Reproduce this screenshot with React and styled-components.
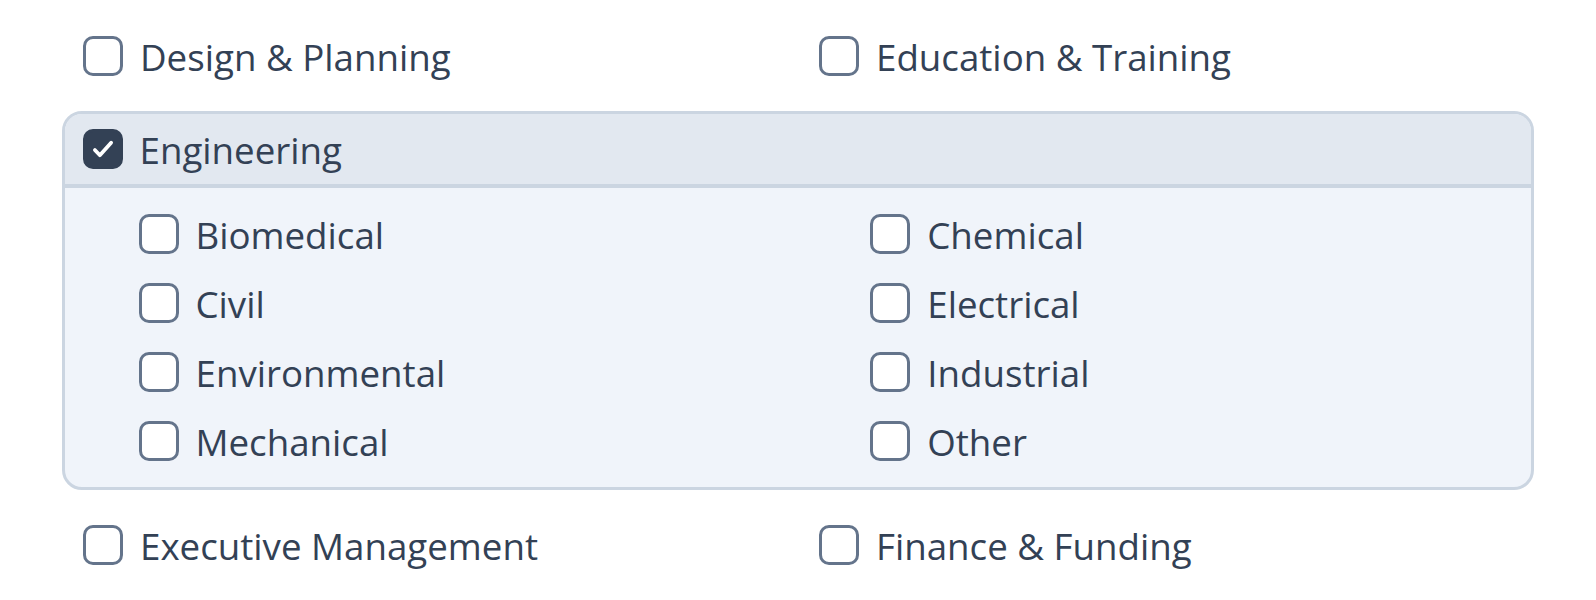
import React, { useState } from 'react'
import styled, { createGlobalStyle } from 'styled-components'

const GlobalStyle = createGlobalStyle`
  html, body {
    margin: 0;
    padding: 0;
    background: #ffffff;
  }
  body {
    font-family: "Open Sans", "Liberation Sans", sans-serif;
    color: #334155;
  }
`

const subFields = [
  'Biomedical', 'Chemical',
  'Civil', 'Electrical',
  'Environmental', 'Industrial',
  'Mechanical', 'Other',
]

function Check({ checked, label, onToggle }) {
  return (
    <Option onClick={onToggle}>
      <Box $checked={checked}>
        {checked && (
          <svg width="30" height="30" viewBox="0 0 24 24" fill="none">
            <path d="M5.5 12.8l4 4.2L18.5 7" stroke="#fff" strokeWidth="3" strokeLinecap="round" strokeLinejoin="round" />
          </svg>
        )}
      </Box>
      <Label>{label}</Label>
    </Option>
  )
}

export default function App() {
  const [checked, setChecked] = useState({ Engineering: true })
  const toggle = (k) => setChecked((s) => ({ ...s, [k]: !s[k] }))

  return (
    <>
      <GlobalStyle />
      <Page>
        <Row>
          <Cell><Check label="Design & Planning" checked={!!checked['Design & Planning']} onToggle={() => toggle('Design & Planning')} /></Cell>
          <Cell><Check label="Education & Training" checked={!!checked['Education & Training']} onToggle={() => toggle('Education & Training')} /></Cell>
        </Row>

        <Panel>
          <PanelHead>
            <Check label="Engineering" checked={!!checked.Engineering} onToggle={() => toggle('Engineering')} />
          </PanelHead>
          <SubGrid>
            {subFields.map((f) => (
              <SubCell key={f}>
                <Check label={f} checked={!!checked[f]} onToggle={() => toggle(f)} />
              </SubCell>
            ))}
          </SubGrid>
        </Panel>

        <Row>
          <Cell><Check label="Executive Management" checked={!!checked['Executive Management']} onToggle={() => toggle('Executive Management')} /></Cell>
          <Cell><Check label="Finance & Funding" checked={!!checked['Finance & Funding']} onToggle={() => toggle('Finance & Funding')} /></Cell>
        </Row>
      </Page>
    </>
  )
}

const Page = styled.div`
  width: 1472px;
  margin: 0 auto;
  padding: 21px 0 0;
  display: flex;
  flex-direction: column;
  gap: 20px;
`

const Row = styled.div`
  display: grid;
  grid-template-columns: 1fr 1fr;
`

const Cell = styled.div`
  height: 70px;
  padding-left: 21px;
  display: flex;
  align-items: center;
`

const Panel = styled.div`
  border: 3.5px solid #cbd5e1;
  border-radius: 20px;
  background: #f0f4fa;
  overflow: hidden;
`

const PanelHead = styled.div`
  height: 70px;
  padding-left: 17.5px;
  display: flex;
  align-items: center;
  background: #e2e8f0;
  border-bottom: 4px solid #cbd5e1;
`

const SubGrid = styled.div`
  display: grid;
  grid-template-columns: 1fr 1fr;
  column-gap: 89px;
  padding: 11px 18px 12px 73.5px;
`

const SubCell = styled.div`
  height: 69px;
  display: flex;
  align-items: center;
`

const Option = styled.label`
  display: flex;
  align-items: center;
  gap: 17px;
  cursor: pointer;
  user-select: none;
`

const Box = styled.span`
  box-sizing: border-box;
  width: 40px;
  height: 40px;
  flex: none;
  border-radius: 10px;
  border: 3.5px solid ${(p) => (p.$checked ? '#334155' : '#64748b')};
  background: ${(p) => (p.$checked ? '#334155' : '#ffffff')};
  display: flex;
  align-items: center;
  justify-content: center;
`

const Label = styled.span`
  font-size: 36.7px;
  line-height: 1;
  color: #334155;
  padding-top: 3px;
`
